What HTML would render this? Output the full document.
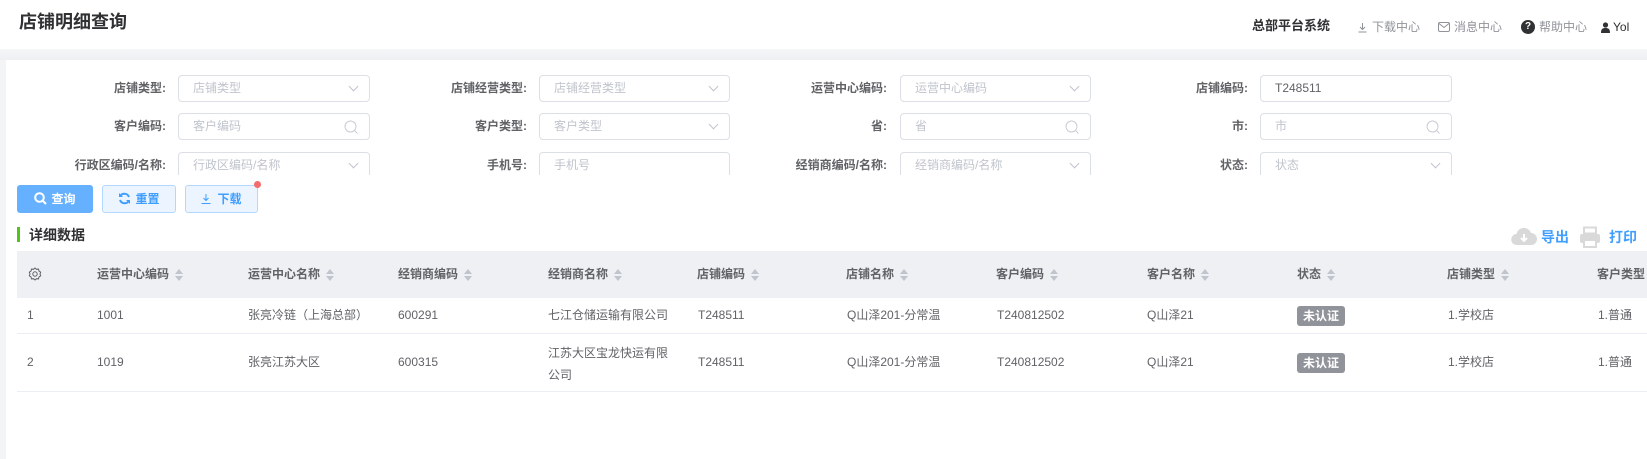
<!DOCTYPE html>
<html><head><meta charset="utf-8">
<style>
*{margin:0;padding:0;box-sizing:border-box}
body{width:1647px;height:459px;overflow:hidden;background:#f3f4f6;font-family:"Liberation Sans","Noto Sans CJK SC",sans-serif;color:#606266;position:relative}
.abs{position:absolute}
.topbar{left:0;top:0;width:1647px;height:49px;background:#fff}
.title{left:19px;top:10px;font-size:18px;font-weight:bold;color:#303133;line-height:24px}
.nav{top:19px;font-size:12px;color:#909399;line-height:16px;white-space:nowrap;display:flex;align-items:center;gap:4px}
.band{left:0;top:49px;width:1647px;height:11px;background:linear-gradient(#f5f6f8,#eef0f3)}
.panel{left:6px;top:60px;width:1641px;height:399px;background:#fff}
.lbl{font-size:12px;font-weight:bold;color:#606266;text-align:right;width:160px;line-height:27px}
.inp{height:27px;border:1px solid #dcdfe6;border-radius:4px;font-size:12px;color:#c0c4cc;line-height:25px;padding-left:14px;background:#fff}
.inp.v{color:#606266}
.chev{position:absolute;right:12px;top:7px;width:7px;height:7px;border-right:1px solid #c0c4cc;border-bottom:1px solid #c0c4cc;transform:rotate(45deg)}
.srch{position:absolute;right:11px;top:6px;width:14px;height:14px}
.clip{left:0;top:60px;width:1647px;height:115px;overflow:hidden}
.btn{top:185px;height:28px;border-radius:3px;font-size:12px;font-weight:bold;line-height:26px;text-align:center}
.th{top:251px;left:17px;width:1630px;height:47px;background:#eef0f4}
.h{top:251px;line-height:47px;font-size:12px;font-weight:bold;color:#606266;white-space:nowrap}
.c{font-size:12px;color:#606266;white-space:nowrap;line-height:18px}
.sort{display:inline-block;vertical-align:middle;margin-left:6px;width:8px;height:12px;position:relative}
.sort:before{content:"";position:absolute;left:0;top:0;border-left:4px solid transparent;border-right:4px solid transparent;border-bottom:5px solid #c0c4cc}
.sort:after{content:"";position:absolute;left:0;top:7px;border-left:4px solid transparent;border-right:4px solid transparent;border-top:5px solid #c0c4cc}
.line{left:17px;width:1630px;height:1px;background:#ebeef5}
.tag{width:48px;height:20px;background:#909399;color:#fff;border-radius:3px;font-size:12px;font-weight:bold;text-align:center;line-height:20px}
</style></head><body>
<div class="abs topbar"></div>
<div class="abs title">店铺明细查询</div>
<div class="abs nav" style="left:1252px;font-size:13px;font-weight:bold;color:#303133;top:18px">总部平台系统</div>
<div class="abs nav" style="left:1357px">
<svg width="11" height="11" viewBox="0 0 11 11"><path d="M5.5 1v6M3 5l2.5 2.5L8 5M1.5 10h8" stroke="#909399" fill="none"/></svg>下载中心</div>
<div class="abs nav" style="left:1438px">
<svg width="12" height="10" viewBox="0 0 12 10"><rect x="0.5" y="0.5" width="11" height="9" rx="1.5" stroke="#909399" fill="none"/><path d="M1 1.5l5 4 5-4" stroke="#909399" fill="none"/></svg>消息中心</div>
<div class="abs nav" style="left:1521px">
<span style="display:inline-block;width:14px;height:14px;border-radius:50%;background:#303133;color:#fff;font-size:10px;font-weight:bold;text-align:center;line-height:14px">?</span>帮助中心</div>
<div class="abs nav" style="left:1601px;color:#303133;gap:3px">
<svg width="9" height="11" viewBox="0 0 9 11"><circle cx="4.5" cy="3" r="2.6" fill="#303133"/><path d="M0 11c0-4 1.5-5 4.5-5s4.5 1 4.5 5z" fill="#303133"/></svg>Yol</div>
<div class="abs band"></div>
<div class="abs panel"></div>

<div class="abs clip">
<div class="abs lbl" style="left:6px;top:15px">店铺类型:</div>
<div class="abs inp" style="left:178px;top:15px;width:192px">店铺类型<i class="chev"></i></div>
<div class="abs lbl" style="left:367px;top:15px">店铺经营类型:</div>
<div class="abs inp" style="left:539px;top:15px;width:191px">店铺经营类型<i class="chev"></i></div>
<div class="abs lbl" style="left:727px;top:15px">运营中心编码:</div>
<div class="abs inp" style="left:900px;top:15px;width:191px">运营中心编码<i class="chev"></i></div>
<div class="abs lbl" style="left:1088px;top:15px">店铺编码:</div>
<div class="abs inp v" style="left:1260px;top:15px;width:192px">T248511</div>

<div class="abs lbl" style="left:6px;top:53px">客户编码:</div>
<div class="abs inp" style="left:178px;top:53px;width:192px">客户编码<svg class="srch" viewBox="0 0 14 14"><circle cx="6.5" cy="6.5" r="5.5" stroke="#c8ccd4" fill="none"/><path d="M10.5 10.5l3 3" stroke="#c8ccd4"/></svg></div>
<div class="abs lbl" style="left:367px;top:53px">客户类型:</div>
<div class="abs inp" style="left:539px;top:53px;width:191px">客户类型<i class="chev"></i></div>
<div class="abs lbl" style="left:727px;top:53px">省:</div>
<div class="abs inp" style="left:900px;top:53px;width:191px">省<svg class="srch" viewBox="0 0 14 14"><circle cx="6.5" cy="6.5" r="5.5" stroke="#c8ccd4" fill="none"/><path d="M10.5 10.5l3 3" stroke="#c8ccd4"/></svg></div>
<div class="abs lbl" style="left:1088px;top:53px">市:</div>
<div class="abs inp" style="left:1260px;top:53px;width:192px">市<svg class="srch" viewBox="0 0 14 14"><circle cx="6.5" cy="6.5" r="5.5" stroke="#c8ccd4" fill="none"/><path d="M10.5 10.5l3 3" stroke="#c8ccd4"/></svg></div>

<div class="abs lbl" style="left:6px;top:92px">行政区编码/名称:</div>
<div class="abs inp" style="left:178px;top:92px;width:192px">行政区编码/名称<i class="chev"></i></div>
<div class="abs lbl" style="left:367px;top:92px">手机号:</div>
<div class="abs inp" style="left:539px;top:92px;width:191px">手机号</div>
<div class="abs lbl" style="left:727px;top:92px">经销商编码/名称:</div>
<div class="abs inp" style="left:900px;top:92px;width:191px">经销商编码/名称<i class="chev"></i></div>
<div class="abs lbl" style="left:1088px;top:92px">状态:</div>
<div class="abs inp" style="left:1260px;top:92px;width:192px">状态<i class="chev"></i></div>
</div>

<div class="abs btn" style="left:17px;width:76px;background:#66b1ff;border:1px solid #66b1ff;color:#fff">
<svg width="13" height="13" viewBox="0 0 13 13" style="vertical-align:-2px;margin-right:4px"><circle cx="5.5" cy="5.5" r="4.3" stroke="#fff" stroke-width="2" fill="none"/><path d="M8.5 8.5l3.5 3.5" stroke="#fff" stroke-width="2"/></svg>查询</div>
<div class="abs btn" style="left:102px;width:74px;background:#ecf5ff;border:1px solid #b3d8ff;color:#409eff">
<svg width="13" height="13" viewBox="0 0 13 13" style="vertical-align:-2px;margin-right:4px"><path d="M11 5A5 5 0 0 0 2.5 3.5M2 8a5 5 0 0 0 8.5 1.5" stroke="#409eff" stroke-width="2" fill="none"/><path d="M1 1v4h4zM12 12V8H8z" fill="#409eff"/></svg>重置</div>
<div class="abs btn" style="left:185px;width:73px;background:#ecf5ff;border:1px solid #b3d8ff;color:#409eff">
<svg width="10" height="10" viewBox="0 0 10 10" style="vertical-align:-1px;margin-right:6px"><path d="M5 0v6M2.5 4L5 6.5 7.5 4M0.5 9.5h9" stroke="#409eff" fill="none"/></svg>下载</div>
<div class="abs" style="left:254px;top:181px;width:7px;height:7px;border-radius:50%;background:#f56c6c"></div>

<div class="abs" style="left:17px;top:227px;width:3px;height:15px;background:#52c41a"></div>
<div class="abs" style="left:29px;top:225px;font-size:14px;font-weight:bold;color:#303133;line-height:20px">详细数据</div>
<div class="abs" style="left:1511px;top:227px">
<svg width="26" height="19" viewBox="0 0 26 19"><path d="M6 18a5.5 5.5 0 0 1-.5-11A7.5 7.5 0 0 1 20 6a6 6 0 0 1 0 12z" fill="#d9d9d9"/><path d="M13 7v7M10 11l3 3 3-3" stroke="#fff" stroke-width="2" fill="none"/></svg></div>
<div class="abs" style="left:1541px;top:227px;font-size:14px;font-weight:bold;color:#409eff;line-height:20px">导出</div>
<div class="abs" style="left:1579px;top:226px">
<svg width="22" height="22" viewBox="0 0 22 22"><rect x="5" y="1.5" width="12" height="6" stroke="#d9d9d9" stroke-width="2" fill="none"/><rect x="1" y="8" width="20" height="9" rx="2" fill="#d9d9d9"/><rect x="5" y="14" width="12" height="7" fill="#fff" stroke="#d9d9d9" stroke-width="2"/></svg></div>
<div class="abs" style="left:1609px;top:227px;font-size:14px;font-weight:bold;color:#409eff;line-height:20px">打印</div>

<div class="abs th"></div>
<div class="abs" style="left:28px;top:267px">
<svg width="14" height="14" viewBox="0 0 14 14"><path d="M7 1l1.5 1.3 2-.2.5 2 1.7 1.1-.7 1.8.7 1.8-1.7 1.1-.5 2-2-.2L7 13l-1.5-1.3-2 .2-.5-2L1.3 8.8 2 7l-.7-1.8L3 4.1l.5-2 2 .2z" stroke="#606266" fill="none"/><circle cx="7" cy="7" r="2.2" stroke="#606266" fill="none"/></svg></div>
<div class="abs h" style="left:97px">运营中心编码<i class="sort"></i></div>
<div class="abs h" style="left:248px">运营中心名称<i class="sort"></i></div>
<div class="abs h" style="left:398px">经销商编码<i class="sort"></i></div>
<div class="abs h" style="left:548px">经销商名称<i class="sort"></i></div>
<div class="abs h" style="left:697px">店铺编码<i class="sort"></i></div>
<div class="abs h" style="left:846px">店铺名称<i class="sort"></i></div>
<div class="abs h" style="left:996px">客户编码<i class="sort"></i></div>
<div class="abs h" style="left:1147px">客户名称<i class="sort"></i></div>
<div class="abs h" style="left:1297px">状态<i class="sort"></i></div>
<div class="abs h" style="left:1447px">店铺类型<i class="sort"></i></div>
<div class="abs h" style="left:1597px">客户类型</div>

<div class="abs line" style="top:333px"></div>
<div class="abs line" style="top:391px"></div>

<div class="abs c" style="top:306px;left:27px">1</div>
<div class="abs c" style="top:306px;left:97px">1001</div>
<div class="abs c" style="top:306px;left:248px">张亮冷链（上海总部）</div>
<div class="abs c" style="top:306px;left:398px">600291</div>
<div class="abs c" style="top:306px;left:548px">七江仓储运输有限公司</div>
<div class="abs c" style="top:306px;left:698px">T248511</div>
<div class="abs c" style="top:306px;left:847px">Q山泽201-分常温</div>
<div class="abs c" style="top:306px;left:997px">T240812502</div>
<div class="abs c" style="top:306px;left:1147px">Q山泽21</div>
<div class="abs tag" style="top:306px;left:1297px">未认证</div>
<div class="abs c" style="top:306px;left:1448px">1.学校店</div>
<div class="abs c" style="top:306px;left:1598px">1.普通</div>

<div class="abs c" style="top:353px;left:27px">2</div>
<div class="abs c" style="top:353px;left:97px">1019</div>
<div class="abs c" style="top:353px;left:248px">张亮江苏大区</div>
<div class="abs c" style="top:353px;left:398px">600315</div>
<div class="abs c" style="top:342px;left:548px;line-height:22px">江苏大区宝龙快运有限<br>公司</div>
<div class="abs c" style="top:353px;left:698px">T248511</div>
<div class="abs c" style="top:353px;left:847px">Q山泽201-分常温</div>
<div class="abs c" style="top:353px;left:997px">T240812502</div>
<div class="abs c" style="top:353px;left:1147px">Q山泽21</div>
<div class="abs tag" style="top:353px;left:1297px">未认证</div>
<div class="abs c" style="top:353px;left:1448px">1.学校店</div>
<div class="abs c" style="top:353px;left:1598px">1.普通</div>
</body></html>
